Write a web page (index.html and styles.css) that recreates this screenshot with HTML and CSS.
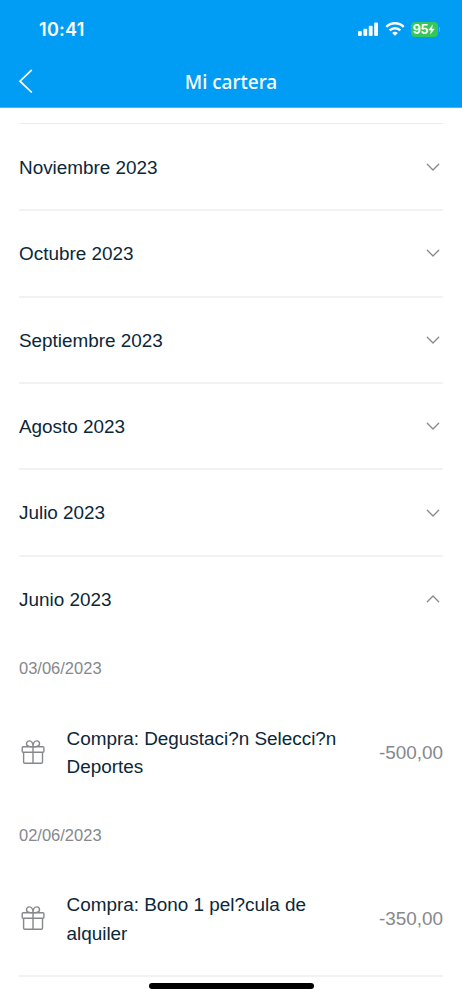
FILE: index.html
```html
<!DOCTYPE html>
<html lang="es">
<head>
<meta charset="utf-8">
<meta name="viewport" content="width=device-width">
<title>Mi cartera</title>
<link rel="stylesheet" href="styles.css">
</head>
<body>
<svg class="defs" width="0" height="0" aria-hidden="true">
  <symbol id="chevron" viewBox="0 0 16 10"><path d="M2.3 2.2 L8 8 L13.7 2.2"/></symbol>
  <symbol id="gift" viewBox="0 0 28 28"><rect x="3.2" y="8.8" width="21.7" height="5.5" rx="1"/><path d="M4.6 14.3V24q0 1.2 1.2 1.2H22.3q1.2 0 1.2-1.2V14.3M14 8.8V25.2M14 8.8C12.8 8.8 7.5 9 7.5 5.7C7.5 4 8.8 2.9 10.3 2.9C13.5 2.9 14 7 14 8.8C14 7 14.5 2.9 17.7 2.9C19.2 2.9 20.5 4 20.5 5.7C20.5 9 15.2 8.8 14 8.8"/></symbol>
</svg>
<header class="header">
  <div class="status">
    <span class="clock">10:41</span>
    <div class="indicators">
      <svg class="signal" viewBox="0 0 20 14"><rect x="0" y="9" width="3.8" height="5" rx="1"/><rect x="5.4" y="6.7" width="3.8" height="7.3" rx="1"/><rect x="10.8" y="3.7" width="3.8" height="10.3" rx="1"/><rect x="16.2" y="0.4" width="3.8" height="13.6" rx="1"/></svg>
      <svg class="wifi" viewBox="0 0 20 14"><path d="M1.3 4.8A12.6 12.6 0 0 1 18.7 4.8M4.6 8.3A7.8 7.8 0 0 1 15.4 8.3"/><path class="dot" d="M10 13.7L7.1 10.9Q10 8.5 12.9 10.9Z"/></svg>
      <div class="battery">
        <span class="level">95</span>
        <svg class="bolt" viewBox="0 0 8 12"><path d="M5.5 0L0.4 6.8H3.3L2.4 12L7.7 5.1H4.6Z"/></svg>
      </div>
      <i class="nub"></i>
    </div>
  </div>
  <nav class="bar">
    <svg class="back" viewBox="0 0 16 24"><path d="M13.3 1.4L2 12.2L13.3 23"/></svg>
    <h1 class="title">Mi cartera</h1>
  </nav>
</header>
<main class="wallet">
  <div class="month"><span>Noviembre 2023</span><svg class="chevron"><use href="#chevron"/></svg></div>
  <div class="month"><span>Octubre 2023</span><svg class="chevron"><use href="#chevron"/></svg></div>
  <div class="month"><span>Septiembre 2023</span><svg class="chevron"><use href="#chevron"/></svg></div>
  <div class="month"><span>Agosto 2023</span><svg class="chevron"><use href="#chevron"/></svg></div>
  <div class="month"><span>Julio 2023</span><svg class="chevron"><use href="#chevron"/></svg></div>
  <div class="month"><span>Junio 2023</span><svg class="chevron open"><use href="#chevron"/></svg></div>
  <section class="details">
    <div class="date">03/06/2023</div>
    <div class="entry"><svg class="gift"><use href="#gift"/></svg><p class="concept">Compra: Degustaci?n Selecci?n Deportes</p><span class="amount">-500,00</span></div>
    <div class="date">02/06/2023</div>
    <div class="entry"><svg class="gift"><use href="#gift"/></svg><p class="concept">Compra: Bono 1 pel?cula de alquiler</p><span class="amount">-350,00</span></div>
  </section>
</main>
<div class="home"></div>
</body>
</html>
```
FILE: styles.css
```css
* { box-sizing: border-box; }
body { margin: 0; height: 999px; overflow: hidden; position: relative; background: #fff; color: #0b2739; font-family: "Liberation Sans", Arial, sans-serif; font-size: 18.9px; }
.defs { position: absolute; }
.header { height: 108px; background: #019df4; color: #fff; border-bottom: 1px solid #45b5f5; }
.status { height: 58px; padding: 0 22px 0 39px; display: flex; justify-content: space-between; align-items: center; }
.clock { font: 600 18px/20px Inter, sans-serif; letter-spacing: 0.3px; padding-top: 1px; }
.indicators { display: flex; align-items: center; }
.signal { width: 20px; height: 14px; fill: #fff; margin-right: 7px; }
.wifi { width: 20px; height: 14px; fill: none; stroke: #fff; stroke-width: 2.5; margin-right: 6px; }
.wifi .dot { fill: #fff; stroke: none; }
.battery { width: 27px; height: 15px; border-radius: 4px; background: #35c759; display: flex; align-items: center; justify-content: center; }
.level { font: 700 12.5px/15px Inter, sans-serif; letter-spacing: -0.3px; }
.bolt { width: 7px; height: 11px; fill: #fff; }
.nub { width: 1.5px; height: 5px; margin-left: 1px; border-radius: 0 2px 2px 0; background: #6bbd9f; }
.bar { height: 46px; display: grid; grid-template-columns: 60px 1fr 60px; align-items: center; }
.back { width: 16px; height: 24px; margin-left: 18px; fill: none; stroke: #fff; stroke-width: 1.7; stroke-linecap: round; }
.title { margin: 0; padding-top: 1px; text-align: center; font: 500 19px/28px "Noto Sans", sans-serif; }
.wallet { padding: 14.9px 19px 0; }
.month { height: 86.4px; border-top: 2px solid #f2f2f2; display: flex; align-items: center; justify-content: space-between; }
.month:first-child { border-top-width: 1px; border-top-color: #ebebeb; padding-top: 1px; }
.month span { padding-top: 1.6px; }
.chevron { width: 16px; height: 10px; margin-right: 2px; fill: none; stroke: #86888c; stroke-width: 1.3; stroke-linecap: round; stroke-linejoin: round; }
.chevron.open { transform: rotate(180deg); }
.details { border-bottom: 2px solid #f2f2f2; }
.date { height: 54px; line-height: 55.4px; font-size: 16.5px; color: #86888c; }
.entry { height: 112.8px; display: grid; grid-template-columns: 28px 1fr auto; column-gap: 19.5px; align-items: center; }
.gift { width: 28px; height: 28px; fill: none; stroke: #86888c; stroke-width: 1.4; }
.concept { margin: 0; padding-top: 2.8px; line-height: 28.5px; }
.amount { color: #86888c; font-size: 18.9px; padding-top: 2px; }
.home { position: absolute; left: 149px; top: 983px; width: 165px; height: 6px; border-radius: 3px; background: #000; }
```
